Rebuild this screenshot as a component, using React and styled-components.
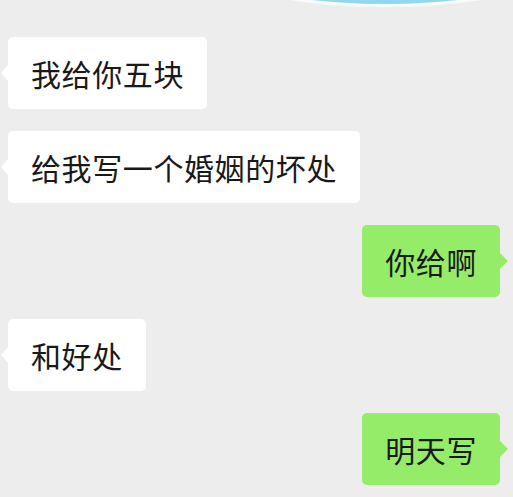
import React from "react";
import styled, { createGlobalStyle, css } from "styled-components";

const messages = [
  { from: "them", text: "我给你五块" },
  { from: "them", text: "给我写一个婚姻的坏处" },
  { from: "me", text: "你给啊" },
  { from: "them", text: "和好处" },
  { from: "me", text: "明天写" },
];

function App() {
  return (
    <>
      <GlobalStyle />
      <Chat>
        <TopEdge>
          <svg width="513" height="12" viewBox="0 0 513 12">
            <ellipse cx="385" cy="-60" rx="216" ry="67" fill="#f7fbfc" />
            <ellipse cx="385" cy="-61" rx="210" ry="65" fill="#93d7ef" />
          </svg>
        </TopEdge>
        {messages.map((m, i) => (
          <Row key={i} $mine={m.from === "me"}>
            <Bubble $mine={m.from === "me"}>{m.text}</Bubble>
          </Row>
        ))}
      </Chat>
    </>
  );
}

export default App;

const GlobalStyle = createGlobalStyle`
  html, body {
    margin: 0;
    padding: 0;
    background-color: #ededed;
  }
  body {
    font-family: "Noto Sans CJK SC", "Noto Sans", sans-serif;
  }
`;

const Chat = styled.div`
  width: 513px;
  height: 497px;
  overflow: hidden;
  background-color: #ededed;
  display: flex;
  flex-direction: column;
  gap: 22px;
`;

const TopEdge = styled.div`
  height: 15px;
  display: flex;
  align-items: flex-start;
  svg {
    display: block;
  }
`;

const Row = styled.div`
  display: flex;
  justify-content: ${(p) => (p.$mine ? "flex-end" : "flex-start")};
  padding: ${(p) => (p.$mine ? "0 13px 0 0" : "0 0 0 8px")};
`;

const Bubble = styled.div`
  position: relative;
  padding: 18px 23px 18px 23px;
  font-size: 30px;
  line-height: 36px;
  letter-spacing: 0.6px;
  color: #191919;
  border-radius: 5px;
  background-color: ${(p) => (p.$mine ? "#95ec69" : "#ffffff")};
  white-space: nowrap;

  &::before {
    content: "";
    position: absolute;
    top: 50%;
    transform: translateY(-50%);
    border-top: 8px solid transparent;
    border-bottom: 8px solid transparent;
    ${(p) =>
      p.$mine
        ? css`
            right: -8px;
            border-left: 8px solid #95ec69;
          `
        : css`
            left: -7px;
            border-right: 7px solid #ffffff;
          `}
  }
`;
